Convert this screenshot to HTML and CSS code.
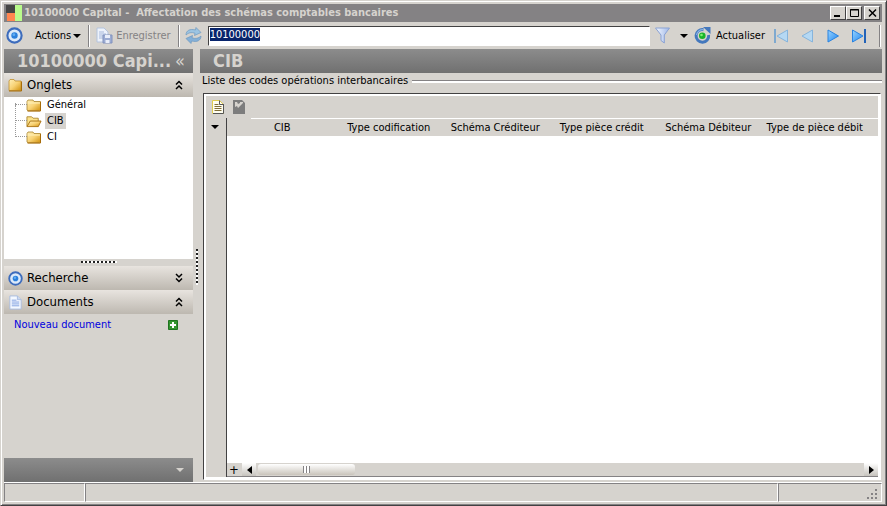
FILE: index.html
```html
<!DOCTYPE html>
<html lang="fr">
<head>
<meta charset="utf-8">
<title>10100000 Capital - Affectation des schémas comptables bancaires</title>
<link rel="stylesheet" href="styles.css">
</head>
<body>
<svg class="defs" aria-hidden="true">
  <defs>
    <linearGradient id="gold" x1="0" y1="0" x2="1" y2="1"><stop offset="0" stop-color="#fff0b8"/><stop offset=".5" stop-color="#f8d274"/><stop offset="1" stop-color="#d0900c"/></linearGradient>
    <linearGradient id="blue" x1="0" y1="0" x2="1" y2="1"><stop offset="0" stop-color="#9ad4ff"/><stop offset="1" stop-color="#1f86f0"/></linearGradient>
    <linearGradient id="glass" x1="0" y1="0" x2="1" y2="0"><stop offset="0" stop-color="#f4f8ff"/><stop offset="1" stop-color="#a0b8e8"/></linearGradient>
    <symbol id="target" viewBox="0 0 16 16"><circle cx="8" cy="8" r="6.7" fill="#dceafa" stroke="#3d6cbc" stroke-width="2"/><circle cx="8" cy="8" r="3" fill="#2c80dc"/><circle cx="7.4" cy="7.2" r="1.3" fill="#62aef4"/></symbol>
    <symbol id="folder" viewBox="0 0 16 13"><path d="M1 11V2.500L2 1h5l1 1.500h6.500V11l-1 .8H2z" fill="url(#gold)" stroke="#a8842c" stroke-width=".8"/><path d="M1.500 4h12.500" stroke="#fff0b8"/><path d="M1.500 12h13V3" fill="none" stroke="#a86c08"/></symbol>
    <symbol id="folder-big" viewBox="0 0 15 14"><path d="M1 12V2.500L2 1h4l1 1.500h6V12z" fill="url(#gold)" stroke="#c09030" stroke-width=".8"/><path d="M1 12.500h12.500V3" fill="none" stroke="#a86c08"/></symbol>
    <symbol id="folder-open" viewBox="0 0 17 13"><path d="M1 11.500v-10h5l1.500 1.500H13v3" fill="#fbe28a" stroke="#b08c38"/><path d="M1 12l3.500-6H16l-3 6z" fill="url(#gold)" stroke="#a87010"/></symbol>
    <symbol id="page" viewBox="0 0 14 16"><path d="M1 1h8l4 4v10H1z" fill="#f4f8ff" stroke="#a9bce0"/><path d="M9 1v4h4" fill="#cbd8f0" stroke="#a9bce0"/><path d="M3 5.500h5M3 7.500h8M3 9.500h8M3 11.500h8" stroke="#7f9fe0"/></symbol>
    <symbol id="up2" viewBox="0 0 8 10"><path d="M1 4.500l3-3 3 3M1 9l3-3 3 3" fill="none" stroke="currentColor" stroke-width="1.500"/></symbol>
  </defs>
</svg>
<div class="window">
  <header class="titlebar">
    <svg class="logo" viewBox="0 0 16 16"><path fill="#454545" d="M0 0h9v8H0z"/><path fill="#ff8650" d="M1 8h8v8H1z"/><path fill="#b9fb8c" d="M9 0h7v16H9z"/></svg>
    <h1>10100000 Capital -&nbsp; Affectation des schémas comptables bancaires</h1>
    <button class="win" aria-label="Réduire"><svg viewBox="0 0 12 10"><path d="M2 8h6" stroke="#000" stroke-width="2"/></svg></button>
    <button class="win" aria-label="Agrandir"><svg viewBox="0 0 12 10"><path d="M2.500 1.500h8v7h-8zM2 2h9" fill="none" stroke="#000"/></svg></button>
    <button class="win close" aria-label="Fermer"><svg viewBox="0 0 12 10"><path d="M3 1.500l7 7M10 1.500l-7 7" stroke="#000" stroke-width="1.500"/></svg></button>
  </header>

  <div class="toolbar">
    <svg class="i17" viewBox="0 0 16 16"><use href="#target"/></svg>
    <button class="tool actions">Actions<i class="caret"></i></button>
    <i class="sep"></i>
    <button class="tool save" disabled><svg class="i17" viewBox="0 0 17 17"><path d="M1 1h7l4 4v10H1z" fill="#edf2fb" stroke="#b4c3dd"/><path d="M3 5h5M3 7h7M3 9h4M3 11h4" stroke="#a7b9dc"/><path d="M7 8h9v8H7z" fill="#9cacd3" stroke="#8192bd"/><path d="M9 8h5v3H9zM9.500 13h4v3h-4z" fill="#e9eefa"/></svg>Enregistrer</button>
    <i class="sep"></i>
    <svg class="i17 sync" viewBox="0 0 17 17"><path d="M1 8c0-4.500 4-6.500 9.500-5L11 .5l5 5-6.500 3 .5-2.300C6.500 5 3.500 5.500 1 8z" fill="#9cc4e2" stroke="#6c98c0" stroke-width=".7"/><path d="M16 9c0 4.500-4 6.500-9.500 5l-.5 2.500-5-5 6.500-3-.5 2.300c3.500 1.200 6.500.7 9-1.800z" fill="#84b0d8" stroke="#6c98c0" stroke-width=".7"/></svg>
    <input class="search" type="text" value="10100000" aria-label="Code" autofocus>
    <button class="tool" aria-label="Filtrer"><svg class="i17" viewBox="0 0 16 17"><path d="M1 1h14L9.800 8v8L6.500 13.500V8z" fill="url(#glass)" stroke="#8aa2d4"/></svg></button>
    <button class="tool more" aria-label="Options de filtre"><i class="caret"></i></button>
    <button class="tool refresh"><svg class="i17" viewBox="0 0 17 17"><path d="M9.500 2.700A6.300 6.300 0 1 0 14.600 8" fill="none" stroke="#4478bd" stroke-width="3"/><path d="M9.500 2.700A6.300 6.300 0 0 0 2.500 8" fill="none" stroke="#88b4e4" stroke-width="1.200"/><path d="M9 0l7.500-.5V7z" fill="#4478bd"/><circle cx="8.300" cy="8.800" r="3.300" fill="#19b52a"/><circle cx="7.500" cy="8" r="1.300" fill="#80ed73"/></svg>Actualiser</button>
    <nav class="pager" aria-label="Enregistrements">
      <button class="tool" disabled aria-label="Premier"><svg viewBox="0 0 16 14"><path d="M2 0v14" stroke="#7fa9cf" stroke-width="2"/><path d="M14.500 1v12L4 7z" fill="#b5d8f3" stroke="#86b4dc"/></svg></button>
      <button class="tool" disabled aria-label="Précédent"><svg viewBox="0 0 16 14"><path d="M13.500 1v12L3 7z" fill="#b5d8f3" stroke="#86b4dc"/></svg></button>
      <button class="tool" aria-label="Suivant"><svg viewBox="0 0 16 14"><path d="M3 1v12l10.500-6z" fill="url(#blue)" stroke="#2a83e0"/></svg></button>
      <button class="tool" aria-label="Dernier"><svg viewBox="0 0 16 14"><path d="M1.500 1v12L12 7z" fill="url(#blue)" stroke="#2a83e0"/><path d="M14 0v14" stroke="#2463b8" stroke-width="2"/></svg></button>
    </nav>
    <i class="sep"></i>
  </div>

  <div class="workspace">
    <aside class="side">
      <div class="band"><h2>10100000 Capi...</h2><button class="collapse" aria-label="Replier">«</button></div>
      <button class="section"><svg class="i15" viewBox="0 0 15 14"><use href="#folder-big"/></svg><span>Onglets</span><svg class="chev"><use href="#up2"/></svg></button>
      <ul class="tree">
        <li><a href="#general"><svg viewBox="0 0 16 13"><use href="#folder"/></svg><span>Général</span></a></li>
        <li><a href="#cib" aria-current="page"><svg viewBox="0 0 17 13"><use href="#folder-open"/></svg><span>CIB</span></a></li>
        <li><a href="#ci"><svg viewBox="0 0 16 13"><use href="#folder"/></svg><span>CI</span></a></li>
      </ul>
      <div class="grip"></div>
      <button class="section"><svg class="i15" viewBox="0 0 16 16"><use href="#target"/></svg><span>Recherche</span><svg class="chev down"><use href="#up2"/></svg></button>
      <button class="section"><svg class="i15" viewBox="0 0 14 16"><use href="#page"/></svg><span>Documents</span><svg class="chev"><use href="#up2"/></svg></button>
      <div class="docs">
        <a href="#nouveau">Nouveau document</a>
        <button class="add" aria-label="Ajouter"><svg viewBox="0 0 10 10"><path fill="#35952f" stroke="#1f7420" d="M.5.5h9v9h-9z"/><path d="M5 2v6M2 5h6" stroke="#fff" stroke-width="2"/></svg></button>
      </div>
      <div class="band foot"><i class="caret"></i></div>
    </aside>
    <div class="splitter"></div>
    <main class="main">
      <div class="band"><h2>CIB</h2></div>
      <div class="legend">Liste des codes opérations interbancaires</div>
      <section class="frame">
        <div class="gridtools">
          <button class="tool" aria-label="Nouveau"><svg viewBox="0 0 12 14"><path d="M.5.5h7l4 4v9H.5z" fill="#fffef0" stroke="#e0cc50"/><path d="M7.500.5v4h4M11.500 4v9.500H1" fill="none" stroke="#555"/><path d="M2.500 4.500h4M2.500 6.500h7M2.500 8.500h7M2.500 10.500h7" stroke="#806d38"/></svg></button>
          <button class="tool" aria-label="Modifier" disabled><svg viewBox="0 0 12 14"><path d="M0 0h9l3 3v11H0z" fill="#7d7d7d"/><path d="M2 2h2l1 2 2-1V2h3v1L5 8 4 6 2 7zM10 0h2v2z" fill="#d6d3ce"/></svg></button>
        </div>
        <div class="gridbody">
          <div class="gutter"><i class="caret"></i></div>
          <div class="sheet">
            <table>
              <thead><tr><th>CIB</th><th>Type codification</th><th>Schéma Créditeur</th><th>Type pièce crédit</th><th>Schéma Débiteur</th><th>Type de pièce débit</th></tr></thead>
            </table>
            <div class="hscroll">
              <button class="plus" aria-label="Ajouter une ligne">+</button>
              <button aria-label="Défiler à gauche"><i class="left"></i></button>
              <div class="track"><div class="thumb"></div></div>
              <button aria-label="Défiler à droite"><i class="right"></i></button>
            </div>
          </div>
        </div>
      </section>
    </main>
  </div>
  <footer class="status"><span class="first"></span><span class="mid"></span><span class="last"><svg viewBox="0 0 12 12"><path fill="#848284" d="M8 0h2v2H8zM8 4h2v2H8zM4 4h2v2H4zM8 8h2v2H8zM4 8h2v2H4zM0 8h2v2H0z"/></svg></span></footer>
</div>
<script>
const box = document.querySelector('.search');
box.focus();
box.select();
</script>
</body>
</html>
```

FILE: styles.css
```css
* { box-sizing: border-box; }
body {
  margin: 0;
  font: 11px/14px "DejaVu Sans Condensed", "DejaVu Sans", sans-serif;
  color: #000;
  background: #d6d3ce;
}
button { font: inherit; color: inherit; margin: 0; padding: 0; border: 0; background: none; }
svg { display: block; flex: none; }
.defs { position: absolute; width: 0; height: 0; }

.window {
  display: flex;
  flex-direction: column;
  height: 100vh;
  padding: 3px 4px 3px 3px;
  border: 1px solid;
  border-color: #d6d3ce #424142 #424142 #d6d3ce;
  box-shadow: inset 1px 1px #fff, inset -1px -1px #848284;
}

.titlebar {
  display: flex;
  align-items: center;
  flex: none;
  height: 18px;
  padding: 0 2px;
  background: #848284;
}
.logo { width: 16px; height: 16px; }
.titlebar h1 { flex: 1; margin: 0 0 0 2px; font-size: 11px; color: #d6d3ce; white-space: nowrap; }
.win {
  width: 16px;
  height: 14px;
  padding: 1px;
  background: #d6d3ce;
  border: 1px solid;
  border-color: #fff #424142 #424142 #fff;
}
.win svg { width: 12px; height: 10px; }
.close { margin-left: 2px; }

.toolbar { display: flex; align-items: center; flex: none; height: 27px; padding: 0 1px 0 2px; }
.i17 { width: 17px; height: 17px; }
.i15 { width: 15px; height: 15px; }
.tool { display: flex; align-items: center; }
.actions { margin: 0 7px 0 12px; gap: 2px; }
.caret { border: 4px solid transparent; border-top-color: currentColor; border-bottom: 0; }
.sep { width: 2px; height: 22px; border-left: 1px solid #848284; border-right: 1px solid #fff; }
.save { gap: 3px; margin: 0 7px 0 6px; color: #848284; }
.sync { margin: 0 6px 0 5px; }
.search {
  flex: 1;
  min-width: 0;
  height: 20px;
  padding: 0 0 2px 1px;
  font: inherit;
  border: 1px solid;
  border-color: #424142 #fff #fff #424142;
  outline: 0;
  margin-right: 4px;
}
.search::selection { color: #fff; background: #08246b; }
.more { margin: 0 6px 0 9px; }
.refresh { gap: 5px; }
.pager { display: flex; gap: 10px; margin: 0 12px 0 8px; }
.pager svg { width: 16px; height: 14px; }

.workspace { display: flex; flex: 1; min-height: 0; }
.side { display: flex; flex-direction: column; flex: none; width: 189px; }
.band {
  display: flex;
  align-items: center;
  flex: none;
  height: 24px;
  padding: 0 8px 0 13px;
  color: #d6d3ce;
  background: linear-gradient(#8c8c8c, #707070);
}
.band h2 { margin: 0; font-size: 18px; line-height: 24px; white-space: nowrap; }
.collapse { margin-left: auto; font-size: 18px; line-height: 20px; }
.section {
  display: flex;
  align-items: center;
  flex: none;
  height: 24px;
  padding: 0 10px 0 4px;
  font-size: 13px;
  text-align: left;
  background: linear-gradient(#e8e4df, #bdb8b0);
}
.section span { flex: 1; margin-left: 4px; }
.chev { width: 8px; height: 10px; }
.down { transform: rotate(180deg); }
.tree { flex: none; height: 162px; margin: 0; padding: 0 0 0 11px; list-style: none; background: #fff; }
.tree li { position: relative; height: 16px; }
.tree li::before {
  content: "";
  position: absolute;
  left: 0;
  bottom: 8px;
  width: 11px;
  height: 16px;
  border: dotted #999;
  border-width: 0 0 1px 1px;
}
.tree li:first-child::before { height: 1px; }
.tree a { display: flex; align-items: center; height: 16px; padding-left: 11px; color: inherit; text-decoration: none; }
.tree svg { width: 16px; height: 13px; }
.tree a span { margin-left: 3px; padding: 0 2px; line-height: 16px; }
.tree a[aria-current] span { background: #d6d3ce; }
.grip {
  flex: none;
  width: 36px;
  height: 7px;
  margin: 0 auto;
  background: repeating-linear-gradient(90deg, #222 0 2px, #fff 2px 4px) 0 2px / 100% 2px no-repeat;
}
.docs { display: flex; align-items: center; justify-content: space-between; height: 22px; padding: 0 15px 0 10px; }
.docs a { color: #0000de; text-decoration: none; }
.add svg { width: 10px; height: 10px; }
.foot { margin-top: auto; justify-content: flex-end; padding-right: 9px; }

.splitter {
  flex: none;
  width: 7px;
  background: repeating-linear-gradient(#222 0 2px, #fff 2px 4px) 3px 200px / 2px 36px no-repeat;
}
.main { display: flex; flex-direction: column; flex: 1; min-width: 0; }
.legend { display: flex; align-items: center; gap: 4px; height: 16px; padding-left: 2px; }
.legend::after { content: ""; flex: 1; height: 2px; background: #fff; border-top: 1px solid #848284; }
.frame {
  display: flex;
  flex-direction: column;
  flex: 1;
  min-height: 0;
  margin: 4px 1px 2px 3px;
  padding: 2px;
  background: #d6d3ce;
  border: 1px solid;
  border-color: #424142 #fff #fff #424142;
  box-shadow: inset 0 0 0 2px #fff;
}
.gridtools { display: flex; align-items: center; gap: 9px; flex: none; height: 22px; padding-left: 6px; }
.gridtools svg { width: 12px; height: 14px; }
.gridbody { display: flex; flex: 1; min-height: 0; }
.gutter { flex: none; width: 21px; padding: 7px 0 0 5px; border-right: 1px solid #424142; }
.gutter .caret { display: block; width: 8px; }
.sheet { display: flex; flex-direction: column; flex: 1; min-width: 0; background: #fff; }
table {
  width: 100%;
  height: 18px;
  padding: 0 10px 0 2px;
  table-layout: fixed;
  border-spacing: 0;
  background: linear-gradient(#fff, #fff) 24px 0 / 100% 1px no-repeat #d6d3ce;
}
th { padding: 2px 0 0; font-weight: normal; white-space: nowrap; }
.hscroll { display: flex; margin-top: auto; height: 14px; background: #d6d3ce; border-bottom: 1px solid #848284; }
.hscroll button {
  display: flex;
  align-items: center;
  justify-content: center;
  width: 14px;
  background: linear-gradient(#fff, #c6c3bd);
}
.hscroll .plus { margin-right: 1px; background: #d6d3ce; font-size: 13px; }
.left, .right { border: 4px solid transparent; }
.left { border-right: 5px solid; border-left: 0; }
.right { border-left: 5px solid; border-right: 0; }
.track { flex: 1; padding: 1px 2px; }
.thumb {
  width: 16%;
  height: 11px;
  border-radius: 3px;
  background: repeating-linear-gradient(90deg, #848284 0 1px, #fff 1px 3px) center / 7px 7px no-repeat, linear-gradient(#fff, #c9c4bb);
}

.status { display: flex; flex: none; height: 20px; border-top: 1px solid #fff; }
.status span { border: 1px solid; border-color: #848284 #fff #fff #848284; }
.status .first { width: 81px; }
.status .mid { flex: 1; }
.status .last { display: flex; align-items: flex-end; justify-content: flex-end; width: 104px; padding-right: 2px; }
.last svg { width: 12px; height: 12px; }
```
